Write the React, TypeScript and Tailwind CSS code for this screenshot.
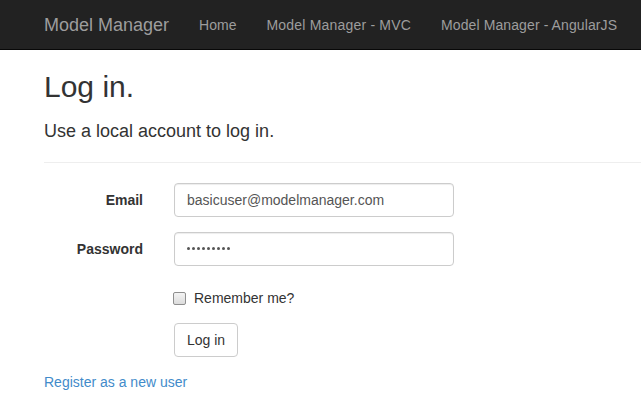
import React from "react";

export default function App() {
  const font = { fontFamily: '"Liberation Sans", Arial, Helvetica, sans-serif' };
  return (
    <div className="min-h-[405px] bg-white text-[#333] text-[14px] leading-[20px]" style={font}>
      <nav className="h-[50px] bg-[#222] border-b border-[#080808] box-border flex">
        <div className="flex pl-[29px]">
          <a className="block px-[15px] pt-[15px] text-[18px] leading-[20px] text-[#9d9d9d]">Model Manager</a>
          <a className="block px-[15px] pt-[15px] text-[14px] leading-[20px] text-[#9d9d9d]">Home</a>
          <a className="block px-[15px] pt-[15px] text-[14px] leading-[20px] text-[#9d9d9d] tracking-[0.2px]">Model Manager - MVC</a>
          <a className="block px-[15px] pt-[15px] text-[14px] leading-[20px] text-[#9d9d9d] whitespace-nowrap tracking-[0.1px]">Model Manager - AngularJS</a>
        </div>
      </nav>
      <main className="pl-[44px]">
        <h2 className="mt-[20px] mb-[19px] text-[30px] leading-[33px] font-normal text-[#333]">Log in.</h2>
        <h4 className="mt-0 text-[18px] leading-[19.8px] font-normal text-[#333]">Use a local account to log in.</h4>
        <hr className="mt-[20px] mb-[20px] border-0 border-t border-[#eee]" />
        <form className="flex flex-col" onSubmit={(e) => e.preventDefault()}>
          <div className="flex mb-[15px]">
            <label className="w-[99px] text-right font-bold pt-[7px] leading-[20px]">Email</label>
            <input
              readOnly
              value="basicuser@modelmanager.com"
              className="ml-[31px] w-[280px] h-[34px] px-[12px] py-[6px] text-[14px] leading-[20px] text-[#555] bg-white border border-[#ccc] rounded-[4px] shadow-[inset_0_1px_1px_rgba(0,0,0,0.075)] outline-none"
              style={font}
            />
          </div>
          <div className="flex mb-[15px]">
            <label className="w-[99px] text-right font-bold pt-[7px] leading-[20px]">Password</label>
            <div className="ml-[31px] w-[280px] h-[34px] px-[12px] flex items-center text-[#555] bg-white border border-[#ccc] rounded-[4px] shadow-[inset_0_1px_1px_rgba(0,0,0,0.075)]">
              <span className="flex gap-[2px] items-center">
                {Array.from({ length: 9 }).map((_, i) => (
                  <span key={i} className="block w-[3px] h-[3px] rounded-full bg-[#555]" />
                ))}
              </span>
            </div>
          </div>
          <div className="flex mb-[15px] pl-[129px] pt-[7px]">
            <label className="flex items-start leading-[20px]">
              <span className="mt-[4px] block w-[13px] h-[13px] rounded-[2px] border border-[#8f8f8f] bg-gradient-to-b from-[#f4f4f4] to-[#dcdcdc]" />
              <span className="ml-[8px]">Remember me?</span>
            </label>
          </div>
          <div className="flex mb-[15px] pl-[130px]">
            <button
              type="submit"
              className="h-[34px] px-[12px] py-[6px] text-[14px] leading-[20px] text-[#333] bg-white border border-[#ccc] rounded-[4px]"
              style={font}
            >
              Log in
            </button>
          </div>
        </form>
        <p>
          <a className="text-[#428bca]">Register as a new user</a>
        </p>
      </main>
    </div>
  );
}
